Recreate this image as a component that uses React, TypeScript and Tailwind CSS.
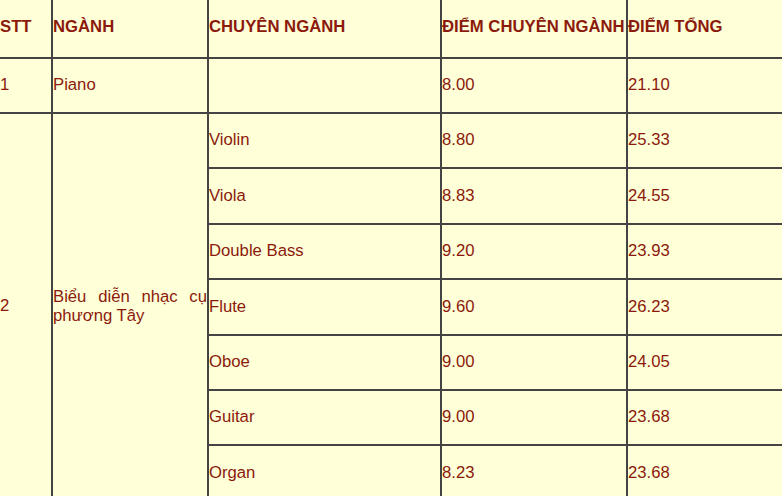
const headers = ["STT", "NGÀNH", "CHUYÊN NGÀNH", "ĐIỂM CHUYÊN NGÀNH", "ĐIỂM TỔNG"];

const western = [
  { name: "Violin", major: "8.80", total: "25.33" },
  { name: "Viola", major: "8.83", total: "24.55" },
  { name: "Double Bass", major: "9.20", total: "23.93" },
  { name: "Flute", major: "9.60", total: "26.23" },
  { name: "Oboe", major: "9.00", total: "24.05" },
  { name: "Guitar", major: "9.00", total: "23.68" },
  { name: "Organ", major: "8.23", total: "23.68" },
];

const cell = "flex items-center border-r-2 border-b-2 border-[#444444]";

export default function App() {
  return (
    <div
      className="w-[782px] h-[496px] overflow-hidden bg-[#ffffd8] text-[16.7px] leading-[1.12] text-[#8b1a0c]"
      style={{ fontFamily: '"Liberation Sans", Arial, sans-serif' }}
    >
      <div className="grid w-[830px] grid-cols-[53px_156px_233px_186px_202px] grid-rows-[59px_55px_repeat(7,55.4px)]">
        {headers.map((h) => (
          <div key={h} className={`${cell} pb-[3px] font-bold whitespace-nowrap`}>
            {h}
          </div>
        ))}

        <div className={cell}>1</div>
        <div className={cell}>Piano</div>
        <div className={cell}></div>
        <div className={cell}>8.00</div>
        <div className={cell}>21.10</div>

        <div className={`${cell} row-span-7 pb-[2px]`}>2</div>
        <div className={`${cell} row-span-7`}>
          <p className="w-full text-justify">Biểu diễn nhạc cụ phương Tây</p>
        </div>
        {western.map((w, i) => (
          <div key={w.name} className="contents">
            <div className={cell} style={{ gridColumn: 3, gridRow: i + 3 }}>
              {w.name}
            </div>
            <div className={cell} style={{ gridColumn: 4, gridRow: i + 3 }}>
              {w.major}
            </div>
            <div className={cell} style={{ gridColumn: 5, gridRow: i + 3 }}>
              {w.total}
            </div>
          </div>
        ))}
      </div>
    </div>
  );
}
